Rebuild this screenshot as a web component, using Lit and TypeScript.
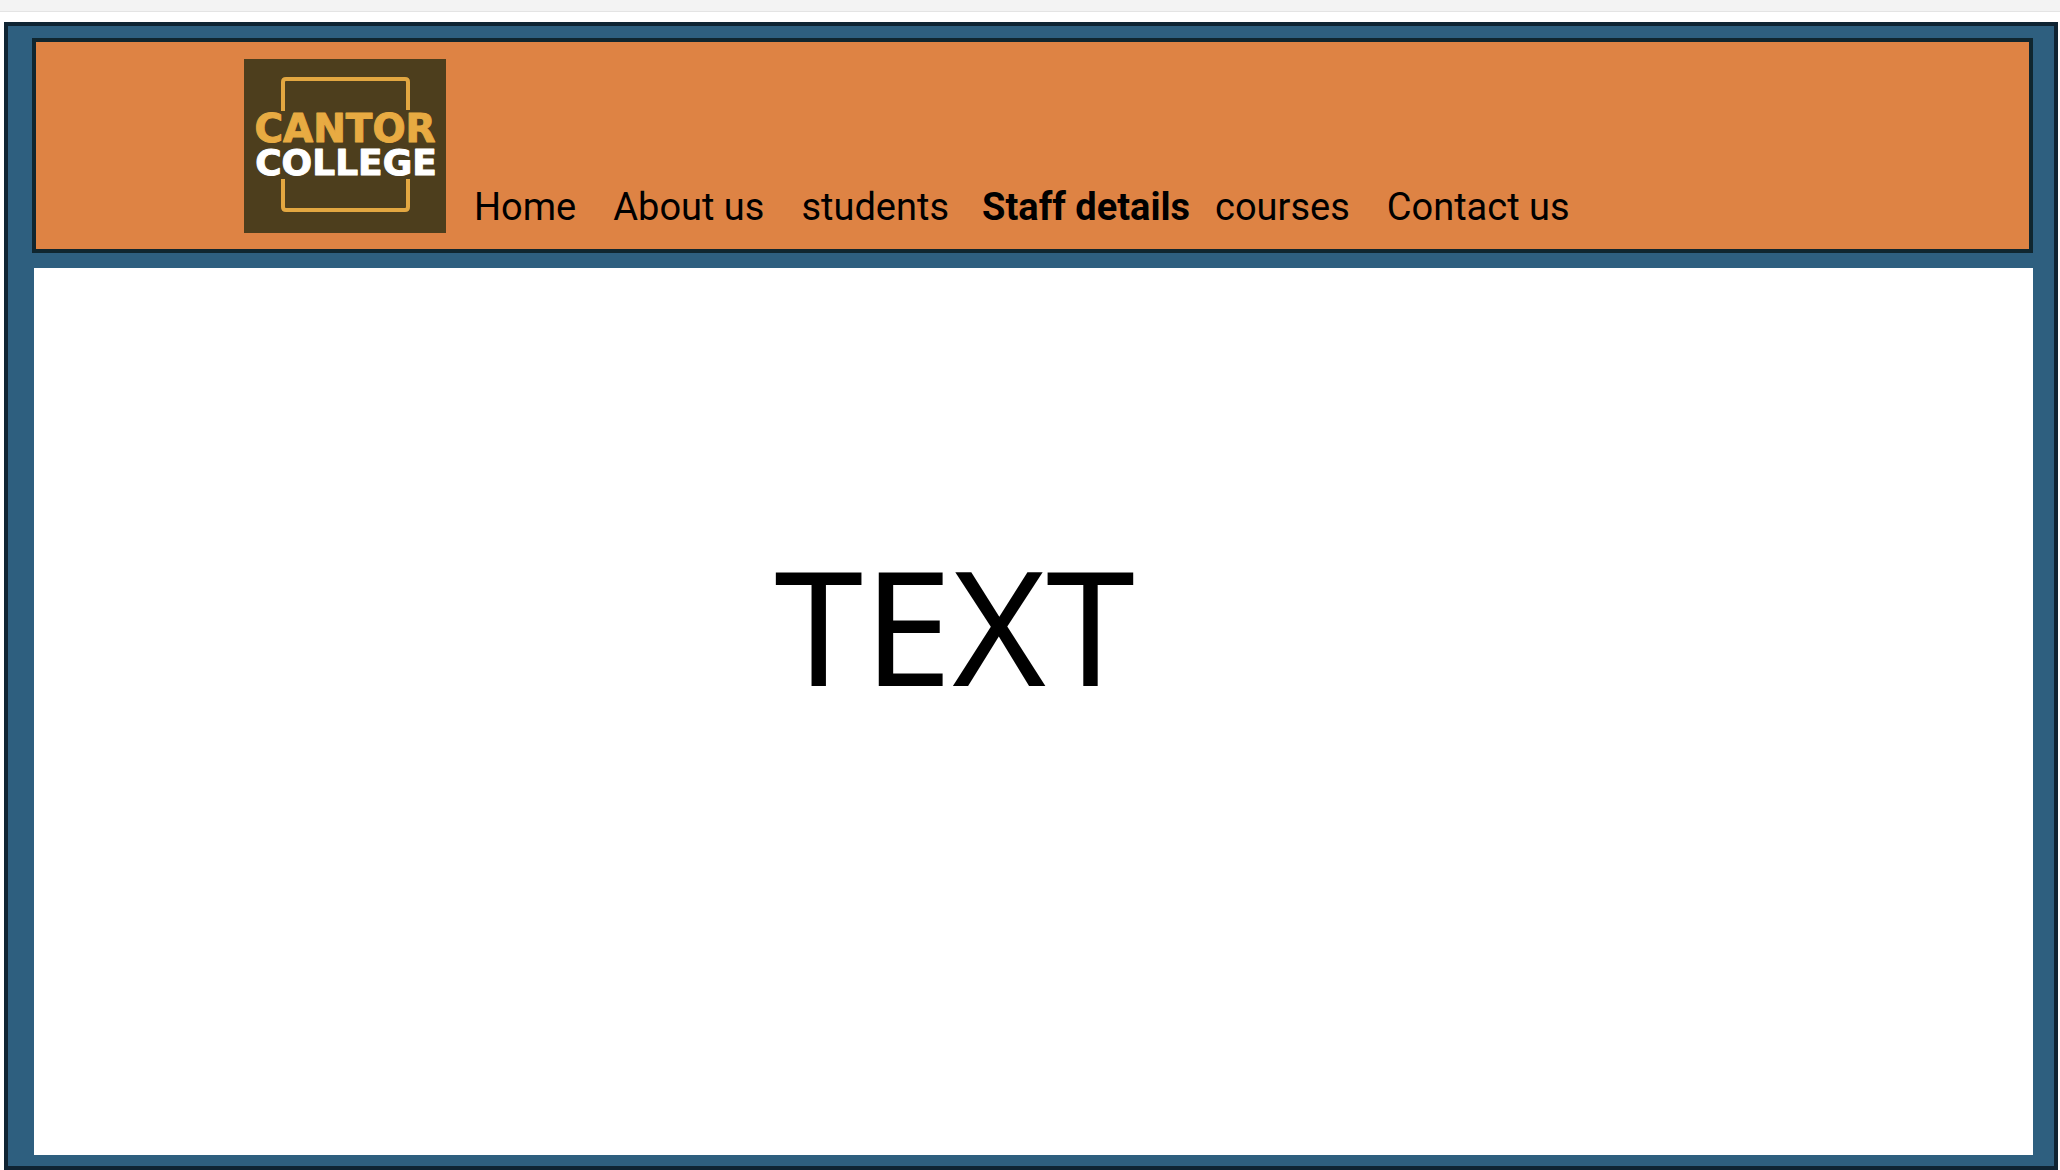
import { LitElement, html, css } from "lit";
import { customElement, property } from "lit/decorators.js";

interface NavItem {
  label: string;
  href: string;
}

const NAV_ITEMS: NavItem[] = [
  { label: "Home", href: "#home" },
  { label: "About us", href: "#about" },
  { label: "students", href: "#students" },
  { label: "Staff details", href: "#staff" },
  { label: "courses", href: "#courses" },
  { label: "Contact us", href: "#contact" },
];

@customElement("college-logo")
export class CollegeLogo extends LitElement {
  static styles = css`
    :host {
      display: block;
      flex: none;
    }
    .logo {
      display: block;
      width: 202px;
      height: 174px;
    }
    .ground {
      fill: #4d3e1d;
    }
    .bracket {
      fill: none;
      stroke: #e3a741;
      stroke-width: 4;
      stroke-linejoin: round;
    }
    .word {
      font-family: "DejaVu Sans", sans-serif;
      font-weight: 700;
      text-anchor: middle;
      stroke-width: 1;
      stroke-linejoin: round;
    }
    .cantor {
      font-size: 39px;
      fill: #e8ab42;
      stroke: #e8ab42;
    }
    .college {
      font-size: 36px;
      fill: #ffffff;
      stroke: #ffffff;
    }
  `;

  render() {
    return html`
      <svg class="logo" viewBox="0 0 202 174" role="img" aria-label="Cantor College">
        <rect class="ground" width="202" height="174"></rect>
        <path class="bracket" d="M39 52V23q0-3 3-3H161q3 0 3 3V51"></path>
        <path class="bracket" d="M39 120V148q0 3 3 3H161q3 0 3-3V120"></path>
        <text class="word cantor" x="101" y="83">CANTOR</text>
        <text class="word college" x="102" y="116">COLLEGE</text>
      </svg>
    `;
  }
}

@customElement("site-header")
export class SiteHeader extends LitElement {
  @property() current = "";

  static styles = css`
    :host {
      display: block;
    }
    .bar {
      display: flex;
      align-items: flex-end;
      gap: 28px;
      padding: 17px 24px 16px 208px;
      border: 4px solid #10262f;
      background: #de8344;
    }
    .nav {
      display: flex;
      flex-wrap: wrap;
      column-gap: 37px;
      padding-bottom: 4px;
      font-family: Roboto, "Liberation Sans", sans-serif;
      font-size: 38px;
      line-height: 44px;
    }
    .link {
      color: #000000;
      text-decoration: none;
      white-space: nowrap;
    }
    .current {
      margin: 0 -12px 0 -4px;
      font-weight: 700;
    }
  `;

  render() {
    return html`
      <header class="bar">
        <college-logo></college-logo>
        <nav class="nav" aria-label="Main">
          ${NAV_ITEMS.map((item) =>
            item.label === this.current
              ? html`<a class="link current" href=${item.href} aria-current="page">${item.label}</a>`
              : html`<a class="link" href=${item.href}>${item.label}</a>`
          )}
        </nav>
      </header>
    `;
  }
}

@customElement("app-root")
export class AppRoot extends LitElement {
  static styles = css`
    :host {
      display: flex;
      flex-direction: column;
      min-height: 100vh;
      background: #ffffff;
    }
    .strip {
      height: 11px;
      border-bottom: 1px solid #e4e4e4;
      background: #f3f3f3;
    }
    .frame {
      flex: 1;
      display: flex;
      flex-direction: column;
      gap: 15px;
      margin: 10px 2px 0 4px;
      padding: 12px 21px 11px 24px;
      border: 4px solid #0f2433;
      background: #2e5f7f;
    }
    .content {
      flex: 1;
      margin-left: 2px;
      padding: 252px 24px 24px 37%;
      background: #ffffff;
    }
    .title {
      margin: 0;
      color: #000000;
      font-family: "Noto Sans", sans-serif;
      font-size: 160px;
      font-weight: 400;
      line-height: 208px;
    }
  `;

  render() {
    return html`
      <div class="strip"></div>
      <div class="frame">
        <site-header current="Staff details"></site-header>
        <main class="content">
          <h1 class="title">TEXT</h1>
        </main>
      </div>
    `;
  }
}
